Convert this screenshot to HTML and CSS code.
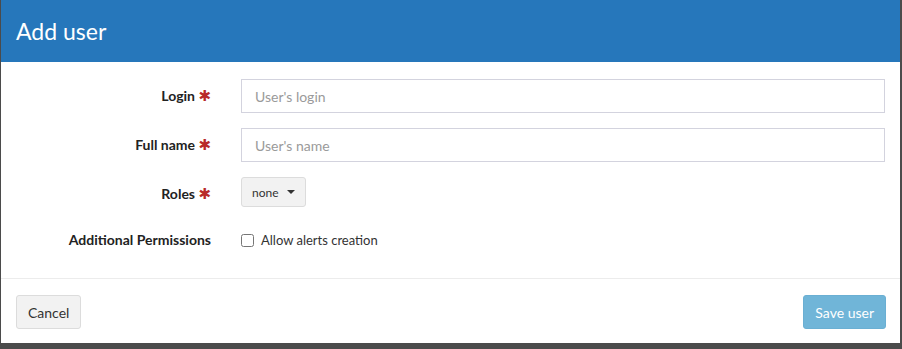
FILE: index.html
```html
<!DOCTYPE html>
<html lang="en">
<head>
    <meta charset="UTF-8">
    <title>Add user</title>
    <link rel="stylesheet" href="styles.css">
</head>
<body>
    <div class="modal">
        <div class="modal-header">
            <h4>Add user</h4>
        </div>
        <div class="modal-body">
            <div class="form-row">
                <label class="control-label" for="login">Login <span class="req">&#10033;</span></label>
                <input type="text" id="login" placeholder="User's login">
            </div>
            <div class="form-row">
                <label class="control-label" for="fullname">Full name <span class="req">&#10033;</span></label>
                <input type="text" id="fullname" placeholder="User's name">
            </div>
            <div class="form-row">
                <label class="control-label">Roles <span class="req">&#10033;</span></label>
                <div>
                    <button class="btn btn-small">none <span class="caret"></span></button>
                </div>
            </div>
            <div class="form-row check-row">
                <label class="control-label">Additional Permissions</label>
                <label class="check"><input type="checkbox"> Allow alerts creation</label>
            </div>
        </div>
        <div class="modal-footer">
            <button class="btn">Cancel</button>
            <button class="btn btn-save" disabled>Save user</button>
        </div>
    </div>
</body>
</html>
```

FILE: styles.css
```css
html, body {
    margin: 0;
    height: 100%;
}
body {
    background-color: #4b4b4b;
    font-family: 'Lato', 'Open Sans', sans-serif;
    font-size: 14px;
    color: #333;
    padding: 0 2px 0 1px;
    box-sizing: border-box;
}
.modal {
    background-color: #ffffff;
    height: 343px;
}
.modal-header {
    background-color: #2677bb;
    height: 62px;
    padding: 0 15px;
    display: flex;
    align-items: center;
    box-sizing: border-box;
}
.modal-header h4 {
    margin: 0;
    color: #ffffff;
    font-size: 23px;
    font-weight: 400;
}
.modal-body {
    padding: 17px 15px 0;
    height: 217px;
    box-sizing: border-box;
    border-bottom: 1px solid #ececec;
}
.form-row {
    display: grid;
    grid-template-columns: 195px 1fr;
    column-gap: 30px;
    align-items: start;
    margin-bottom: 15px;
    height: 34px;
}
.control-label {
    text-align: right;
    font-weight: 700;
    font-size: 14px;
    color: #222;
    line-height: 34px;
    height: 34px;
}
.req {
    color: #b82a2a;
    font-family: 'DejaVu Sans', sans-serif;
    font-size: 15px;
    font-weight: 700;
    line-height: 1;
}
.form-row input[type="text"] {
    height: 34px;
    box-sizing: border-box;
    border: 1px solid #d3d3de;
    border-radius: 0;
    padding: 0 13px;
    font-family: inherit;
    font-size: 14px;
    color: #333;
}
.form-row input::placeholder {
    color: #9a9a9a;
}
.check-row {
    margin-top: -3px;
}
.check {
    display: flex;
    align-items: center;
    gap: 7px;
    font-size: 13px;
    line-height: 34px;
    height: 34px;
    font-weight: 400;
}
.check input {
    margin: 0;
    width: 13px;
    height: 13px;
}
.btn {
    font-family: inherit;
    font-size: 14px;
    color: #333;
    background-color: #f2f2f2;
    border: 1px solid #dcdcdc;
    border-radius: 3px;
    height: 34px;
    padding: 0 11px;
    cursor: pointer;
}
.btn-small {
    height: 30px;
    font-size: 12px;
    padding: 0 10px;
    display: inline-flex;
    align-items: center;
    gap: 8px;
}
.caret {
    width: 0;
    height: 0;
    border-left: 4px solid transparent;
    border-right: 4px solid transparent;
    border-top: 4px solid #333;
}
.modal-footer {
    padding: 16px 14px 0 15px;
    display: flex;
    justify-content: space-between;
}
.btn-save {
    background-color: #70b5d8;
    border-color: #6aafd3;
    color: #ffffff;
    cursor: default;
}
```
